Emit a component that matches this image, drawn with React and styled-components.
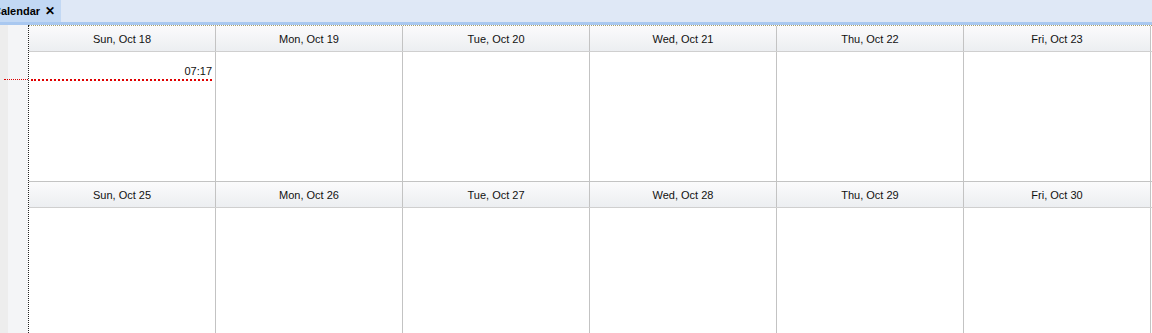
import React from "react";
import styled, { createGlobalStyle } from "styled-components";

const GlobalStyle = createGlobalStyle`
  html, body { margin: 0; padding: 0; background: #fff; overflow: hidden; }
  body { font-family: "Liberation Sans", Arial, sans-serif; font-size: 11px; color: #000; }
`;

const weeks = [
  ["Sun, Oct 18", "Mon, Oct 19", "Tue, Oct 20", "Wed, Oct 21", "Thu, Oct 22", "Fri, Oct 23"],
  ["Sun, Oct 25", "Mon, Oct 26", "Tue, Oct 27", "Wed, Oct 28", "Thu, Oct 29", "Fri, Oct 30"],
];

const App = () => {
  return (
    <Page>
      <GlobalStyle />
      <TabBar>
        <Tab>
          <span className="label">Calendar</span>
          <span className="close">✕</span>
        </Tab>
      </TabBar>
      <Body>
        <Gutter>
          <div className="edge" />
          <div className="inner">
            <NowTick />
          </div>
        </Gutter>
        <Weeks>
          {weeks.map((days, w) => (
            <Week key={w} $first={w === 0}>
              <HeaderRow>
                {days.map((d) => (
                  <DayHeader key={d}>{d}</DayHeader>
                ))}
              </HeaderRow>
              <CellRow $tall={w === 1}>
                {days.map((d, i) => (
                  <DayCell key={d}>
                    {w === 0 && i === 0 && (
                      <NowMarker>
                        <span>07:17</span>
                      </NowMarker>
                    )}
                  </DayCell>
                ))}
              </CellRow>
            </Week>
          ))}
        </Weeks>
      </Body>
    </Page>
  );
};

export default App;

const Page = styled.div`
  width: 1152px;
  height: 333px;
  display: flex;
  flex-direction: column;
  overflow: hidden;
`;

const TabBar = styled.div`
  height: 22px;
  background: #dfe8f6;
  border-bottom: 3px solid #a9c8f0;
  display: flex;
  align-items: flex-end;
  flex-shrink: 0;
`;

const Tab = styled.div`
  margin-left: -7px;
  height: 22px;
  padding: 0 6px 0 0;
  background: #c2d8f4;
  display: flex;
  align-items: center;
  gap: 5px;
  font-weight: bold;
  font-size: 11px;

  .label {
    color: #000;
  }
  .close {
    font-size: 12px;
    color: #000;
  }
`;

const Body = styled.div`
  flex: 1;
  display: flex;
  min-height: 0;
`;

const Gutter = styled.div`
  width: 28px;
  flex-shrink: 0;
  display: flex;
  border-right: 1px dotted #222;

  .edge {
    width: 8px;
    background: #ededed;
  }
  .inner {
    flex: 1;
    background: #f4f5f7;
    padding-top: 54px;
  }
`;

const NowTick = styled.div`
  margin-left: -4px;
  border-top: 1px dotted #d00;
`;

const Weeks = styled.div`
  flex: 1;
  display: flex;
  flex-direction: column;
  border-top: 1px dotted #a8a070;
`;

const Week = styled.div`
  display: flex;
  flex-direction: column;
  border-top: ${(p) => (p.$first ? "none" : "1px solid #c3c3c3")};
`;

const HeaderRow = styled.div`
  display: grid;
  grid-template-columns: repeat(6, 187px);
  height: 25px;
  border-bottom: 1px solid #cfcfcf;
`;

const DayHeader = styled.div`
  background: linear-gradient(#fbfbfc, #eceef1);
  border-right: 1px solid #c3c3c3;
  display: flex;
  align-items: center;
  justify-content: center;
  color: #111;
`;

const CellRow = styled.div`
  display: grid;
  grid-template-columns: repeat(6, 187px);
  height: ${(p) => (p.$tall ? "140px" : "129px")};
`;

const DayCell = styled.div`
  border-right: 1px solid #c3c3c3;
  position: relative;
  background: #fff;
`;

const NowMarker = styled.div`
  position: absolute;
  left: 2px;
  right: 3px;
  top: 13px;
  border-bottom: 2px dotted #e00000;
  text-align: right;
  padding-bottom: 1px;
  line-height: 13px;
  color: #111;
`;
